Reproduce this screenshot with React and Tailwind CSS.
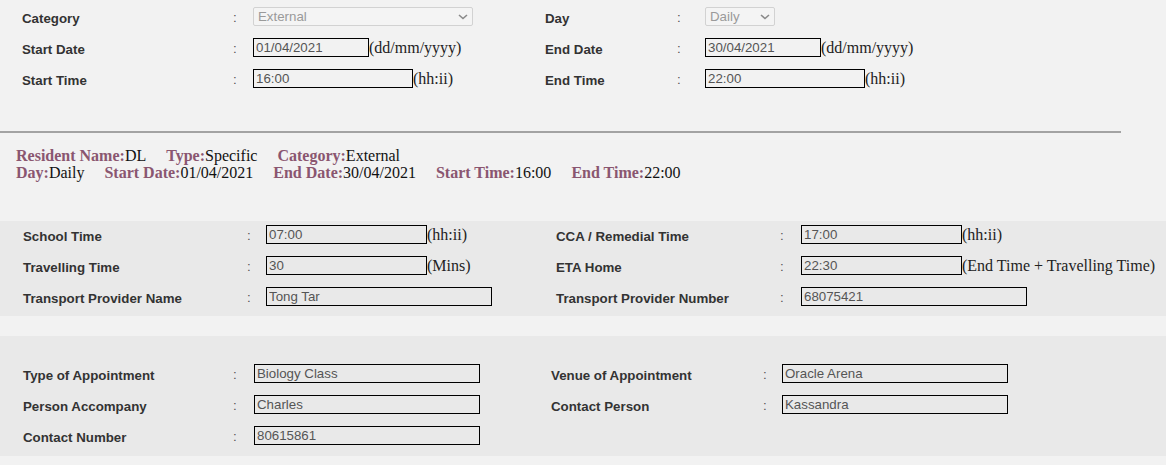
import React from 'react';

const serif = "font-['Liberation_Serif','Times_New_Roman',serif]";

function Label({ children }) {
  return <div className="mt-[4px] text-[13.3px] font-bold text-[#333]">{children}</div>;
}

function Colon() {
  return <div className="mt-[2px] text-[13.3px] text-[#555]">:</div>;
}

function Box({ value, w }) {
  return (
    <input
      readOnly
      value={value}
      className={`${w} h-[19px] border border-black bg-transparent px-[2px] text-[13.3px] leading-[17px] text-[#555] outline-none`}
    />
  );
}

function Hint({ children }) {
  return <span className={`${serif} text-[16px] leading-[19px] text-[#222]`}>{children}</span>;
}

function FakeSelect({ value, w }) {
  return (
    <div className={`${w} flex h-[19px] items-center justify-between rounded-[2px] border border-[#d2d2d2] bg-[#f4f4f4] pl-[4px] pr-[4px] text-[13.3px] text-[#9a9a9a]`}>
      <span>{value}</span>
      <svg width="10" height="6" viewBox="0 0 10 6" fill="none">
        <path d="M1 1l4 3.5L9 1" stroke="#8a8a8a" strokeWidth="1.6" />
      </svg>
    </div>
  );
}

function Field({ label, labelW, colonW, children, w }) {
  return (
    <div className={`flex h-[19px] items-center ${w || ''}`}>
      <div className={`${labelW} shrink-0`}>
        <Label>{label}</Label>
      </div>
      <div className={`${colonW} shrink-0`}>
        <Colon />
      </div>
      <div className="flex items-center">{children}</div>
    </div>
  );
}

function Info({ k, v }) {
  return (
    <span className="mr-5">
      <b className="text-[#8a5670]">{k}:</b>
      {v}
    </span>
  );
}

export default function App() {
  return (
    <div className="min-h-[465px] bg-[#f2f2f2] pb-[9px] font-['Liberation_Sans',Arial,sans-serif]">
      {/* filter block */}
      <div className="flex flex-col gap-3 pl-[22px] pt-[7px]">
        <div className="flex">
          <Field label="Category" labelW="w-[211px]" colonW="w-[20px]" w="w-[523px]">
            <FakeSelect value="External" w="w-[220px]" />
          </Field>
          <Field label="Day" labelW="w-[132px]" colonW="w-[28px]">
            <FakeSelect value="Daily" w="w-[70px]" />
          </Field>
        </div>
        <div className="flex">
          <Field label="Start Date" labelW="w-[211px]" colonW="w-[20px]" w="w-[523px]">
            <Box value="01/04/2021" w="w-[116px]" />
            <Hint>(dd/mm/yyyy)</Hint>
          </Field>
          <Field label="End Date" labelW="w-[132px]" colonW="w-[28px]">
            <Box value="30/04/2021" w="w-[116px]" />
            <Hint>(dd/mm/yyyy)</Hint>
          </Field>
        </div>
        <div className="flex">
          <Field label="Start Time" labelW="w-[211px]" colonW="w-[20px]" w="w-[523px]">
            <Box value="16:00" w="w-[160px]" />
            <Hint>(hh:ii)</Hint>
          </Field>
          <Field label="End Time" labelW="w-[132px]" colonW="w-[28px]">
            <Box value="22:00" w="w-[160px]" />
            <Hint>(hh:ii)</Hint>
          </Field>
        </div>
      </div>

      <div className="mt-[43px] h-[2px] w-[1121px] bg-[#a3a3a3]" />

      {/* summary */}
      <div className={`${serif} pl-[16px] pt-[14px] text-[16px] leading-[17px] text-[#111]`}>
        <div>
          <Info k="Resident Name" v="DL" />
          <Info k="Type" v="Specific" />
          <Info k="Category" v="External" />
        </div>
        <div>
          <Info k="Day" v="Daily" />
          <Info k="Start Date" v="01/04/2021" />
          <Info k="End Date" v="30/04/2021" />
          <Info k="Start Time" v="16:00" />
          <Info k="End Time" v="22:00" />
        </div>
      </div>

      {/* transport */}
      <div className="mt-[40px] flex flex-col gap-3 bg-[#e9e9e9] pb-[10px] pl-[23px] pt-[4px]">
        <div className="flex">
          <Field label="School Time" labelW="w-[224px]" colonW="w-[19px]" w="w-[533px]">
            <Box value="07:00" w="w-[161px]" />
            <Hint>(hh:ii)</Hint>
          </Field>
          <Field label="CCA / Remedial Time" labelW="w-[224px]" colonW="w-[21px]">
            <Box value="17:00" w="w-[161px]" />
            <Hint>(hh:ii)</Hint>
          </Field>
        </div>
        <div className="flex">
          <Field label="Travelling Time" labelW="w-[224px]" colonW="w-[19px]" w="w-[533px]">
            <Box value="30" w="w-[161px]" />
            <Hint>(Mins)</Hint>
          </Field>
          <Field label="ETA Home" labelW="w-[224px]" colonW="w-[21px]">
            <Box value="22:30" w="w-[161px]" />
            <Hint>(End Time + Travelling Time)</Hint>
          </Field>
        </div>
        <div className="flex">
          <Field label="Transport Provider Name" labelW="w-[224px]" colonW="w-[19px]" w="w-[533px]">
            <Box value="Tong Tar" w="w-[226px]" />
          </Field>
          <Field label="Transport Provider Number" labelW="w-[224px]" colonW="w-[21px]">
            <Box value="68075421" w="w-[226px]" />
          </Field>
        </div>
      </div>

      {/* appointment */}
      <div className="mt-5 flex flex-col gap-3 bg-[#e9e9e9] pb-[11px] pl-[23px] pt-[28px]">
        <div className="flex">
          <Field label="Type of Appointment" labelW="w-[210px]" colonW="w-[21px]" w="w-[528px]">
            <Box value="Biology Class" w="w-[226px]" />
          </Field>
          <Field label="Venue of Appointment" labelW="w-[212px]" colonW="w-[19px]">
            <Box value="Oracle Arena" w="w-[226px]" />
          </Field>
        </div>
        <div className="flex">
          <Field label="Person Accompany" labelW="w-[210px]" colonW="w-[21px]" w="w-[528px]">
            <Box value="Charles" w="w-[226px]" />
          </Field>
          <Field label="Contact Person" labelW="w-[212px]" colonW="w-[19px]">
            <Box value="Kassandra" w="w-[226px]" />
          </Field>
        </div>
        <div className="flex">
          <Field label="Contact Number" labelW="w-[210px]" colonW="w-[21px]" w="w-[528px]">
            <Box value="80615861" w="w-[226px]" />
          </Field>
        </div>
      </div>
    </div>
  );
}
